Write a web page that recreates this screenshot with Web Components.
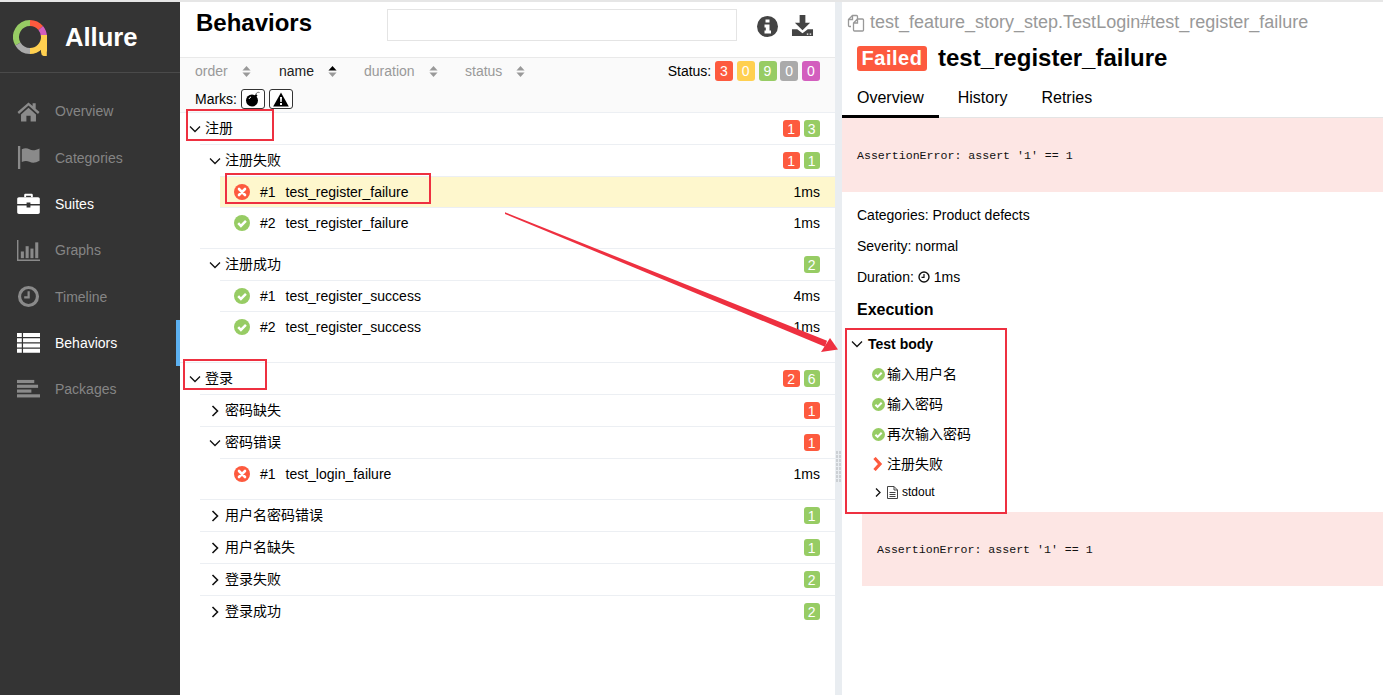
<!DOCTYPE html>
<html>
<head>
<meta charset="utf-8">
<title>Allure</title>
<style>
    html, body { margin: 0; height: 100%; overflow: hidden; }
    body { font: 14px "Liberation Sans", "Noto Sans CJK SC", sans-serif; color: #000; }
</style>
</head>
<body>
<allure-app>
    <side-bar slot="nav">
        <nav-item icon="home">Overview</nav-item>
        <nav-item icon="flag">Categories</nav-item>
        <nav-item icon="briefcase" bright>Suites</nav-item>
        <nav-item icon="chart">Graphs</nav-item>
        <nav-item icon="clock">Timeline</nav-item>
        <nav-item icon="list" bright active>Behaviors</nav-item>
        <nav-item icon="packages">Packages</nav-item>
    </side-bar>

    <behaviors-pane slot="list">
        <tree-group label="注册" fail="1" pass="3" open>
            <tree-group label="注册失败" fail="1" pass="1" open>
                <tree-leaf status="failed" num="1" name="test_register_failure" time="1ms" selected></tree-leaf>
                <tree-leaf status="passed" num="2" name="test_register_failure" time="1ms"></tree-leaf>
            </tree-group>
            <tree-group label="注册成功" pass="2" open>
                <tree-leaf status="passed" num="1" name="test_register_success" time="4ms"></tree-leaf>
                <tree-leaf status="passed" num="2" name="test_register_success" time="1ms"></tree-leaf>
            </tree-group>
        </tree-group>
        <tree-group label="登录" fail="2" pass="6" open>
            <tree-group label="密码缺失" fail="1"></tree-group>
            <tree-group label="密码错误" fail="1" open>
                <tree-leaf status="failed" num="1" name="test_login_failure" time="1ms"></tree-leaf>
            </tree-group>
            <tree-group label="用户名密码错误" pass="1"></tree-group>
            <tree-group label="用户名缺失" pass="1"></tree-group>
            <tree-group label="登录失败" pass="2"></tree-group>
            <tree-group label="登录成功" pass="2"></tree-group>
        </tree-group>
    </behaviors-pane>

    <test-detail slot="detail"></test-detail>
</allure-app>
<red-marks></red-marks>

<script>
const ICONS = {
    home: '<path d="M12 2.5 .5 12.6l1.6 1.9L12 5.8l9.9 8.7 1.6-1.9-4-3.5V3.5h-3.2v2.8z"/><path d="M4.2 15 12 8.2l7.8 6.8v7.5h-5.6v-6H9.8v6H4.200z"/>',
    flag: '<rect x="1" y="0" width="2.400" height="24"/><path d="M5 3.500c3-1.500 5.500-1.500 8 0 3 1.500 6.500 1 10.500-1v13c-4 2.200-7.500 2.500-10.500 1-2.500-1.300-5-1.300-8 .3z"/>',
    briefcase: '<path d="M7.500 4.500V2.200C7.500 1.300 8.200.800 9 .800h6c.800 0 1.500.500 1.500 1.400v2.300h-2V2.800h-5v1.700z"/><path d="M2 4.500h20c1 0 1.800.800 1.800 1.800v5.200H14v-1.500h-4v1.500H.200V6.300c0-1 .800-1.800 1.800-1.800z"/><path d="M.2 13H10v2h4v-2h9.800v7c0 1-.800 1.800-1.800 1.800H2c-1 0-1.800-.800-1.800-1.800z"/>',
    chart: '<path d="M0 1h1.500v20.500H24V23H0z"/><rect x="4" y="13" width="3.200" height="7"/><rect x="9" y="7.500" width="3.200" height="12.500"/><rect x="14" y="10" width="3.200" height="10"/><rect x="19" y="3.500" width="3.200" height="16.500"/>',
    clock: '<path fill-rule="evenodd" d="M12 1a11 11 0 1 0 0 22 11 11 0 0 0 0-22zm0 3.300a7.700 7.700 0 1 1 0 15.400 7.700 7.700 0 0 1 0-15.400z"/><path d="M11 6.500h2.300V14H7.500v-2.200H11z"/>',
    list: '<path d="M0 2h24v4.300H0zM0 7.500h24v4.300H0zM0 13h24v4.300H0zM0 18.500h24v4.300H0z"/><rect x="5" y="2" width="1.300" height="21" fill="#343434"/>',
    packages: '<rect x="0" y="2" width="18" height="3.300"/><rect x="0" y="7" width="22" height="3.300"/><rect x="0" y="12" width="15" height="3.300"/><rect x="0" y="17" width="24" height="3.300"/>'
};

// status colours used by the badges and the tree icons
const COLORS = { failed: '#fd5a3e', broken: '#ffd050', passed: '#97cc64', skipped: '#aaa', unknown: '#d35ebe' };

const statusIcon = (status, size) => status === 'failed'
    ? `<svg width="${size}" height="${size}" viewBox="0 0 16 16"><circle cx="8" cy="8" r="8" fill="${COLORS.failed}"/><path d="M5 5l6 6M11 5l-6 6" stroke="#fff" stroke-width="2.600" stroke-linecap="round"/></svg>`
    : `<svg width="${size}" height="${size}" viewBox="0 0 16 16"><circle cx="8" cy="8" r="8" fill="${COLORS.passed}"/><path d="M4.200 8.200l2.700 2.700 5-5" fill="none" stroke="#fff" stroke-width="2.500"/></svg>`;

const chevron = (open) => open
    ? '<svg width="12" height="12" viewBox="0 0 12 12"><path d="M1 3.500l5 5 5-5" fill="none" stroke="#111" stroke-width="1.300"/></svg>'
    : '<svg width="12" height="12" viewBox="0 0 12 12"><path d="M3.500 1l5 5-5 5" fill="none" stroke="#111" stroke-width="1.600"/></svg>';

class AllureApp extends HTMLElement {
    constructor() {
        super();
        this.attachShadow({ mode: 'open' });
        this.shadowRoot.innerHTML = `
            <style>
                :host { display: flex; height: 100vh; box-sizing: border-box; border-top: 2px solid #e6e6e6; background: #fff; }
                .nav { flex: 0 0 180px; display: flex; }
                .list { flex: 0 0 655px; display: flex; min-width: 0; }
                .split { flex: 0 0 7px; background: #e9edf1; }
                .grip { display: block; margin: 449px 0 0 1px; }
                .detail { flex: 1; display: flex; min-width: 0; }
            </style>
            <div class="nav"><slot name="nav"></slot></div>
            <div class="list"><slot name="list"></slot></div>
            <div class="split">
                <svg class="grip" width="5" height="32" viewBox="0 0 5 32" fill="#ccd0d4">
                    <path d="M0 0h2v3H0zM3 0h2v3H3zM0 4h2v3H0zM3 4h2v3H3zM0 8h2v3H0zM3 8h2v3H3zM0 12h2v3H0zM3 12h2v3H3zM0 16h2v3H0zM3 16h2v3H3zM0 20h2v3H0zM3 20h2v3H3zM0 24h2v3H0zM3 24h2v3H3zM0 28h2v3H0zM3 28h2v3H3z"/>
                </svg>
            </div>
            <div class="detail"><slot name="detail"></slot></div>
        `;
    }
}

class SideBar extends HTMLElement {
    constructor() {
        super();
        this.attachShadow({ mode: 'open' });
        this.shadowRoot.innerHTML = `
            <style>
                :host { display: block; width: 180px; background: #343434; color: #fff; }
                .brand {
                    box-sizing: border-box;
                    border-bottom: 1px solid #4a4a4a;
                    height: 71px;
                    display: flex;
                    align-items: center;
                    padding-left: 13px;
                }
                .brand svg { display: block; margin-top: 1px; }
                .name { font-size: 25.600px; font-weight: bold; margin-left: 17px; }
                nav { padding-top: 15.200px; }
            </style>
            <div class="brand">
                <svg width="35" height="36" viewBox="0 0 35 36" fill="none" stroke-width="6">
                    <path d="M4.900 24A14 14 0 0 1 17 3" stroke="#97cc64"/>
                    <path d="M17 3A14 14 0 0 1 27.700 8" stroke="#fd5a3e"/>
                    <path d="M27.700 8A14 14 0 0 1 31 17" stroke="#d35ebe"/>
                    <path d="M31 17A14 14 0 0 1 17 31" stroke="#ffd050"/>
                    <path d="M17 31A14 14 0 0 1 4.900 24" stroke="#aaa"/>
                    <path d="M31 15v17c0 .8.600 1.500 2.800 1.500" stroke="#ffd050"/>
                </svg>
                <span class="name">Allure</span>
            </div>
            <nav><slot></slot></nav>
        `;
    }
}

class NavItem extends HTMLElement {
    constructor() {
        super();
        this.attachShadow({ mode: 'open' });
    }

    connectedCallback() {
        const bright = this.hasAttribute('bright');
        this.shadowRoot.innerHTML = `
            <style>
                :host {
                    display: flex;
                    align-items: center;
                    height: 46.330px;
                    box-sizing: border-box;
                    padding-left: 17px;
                    color: ${bright ? '#fff' : '#858585'};
                    border-right: 4px solid ${this.hasAttribute('active') ? '#5cb0f0' : 'transparent'};
                }
                svg { flex: none; fill: ${bright ? '#fff' : '#8a8a8a'}; }
                .label { margin-left: 15px; }
            </style>
            <svg width="23" height="23" viewBox="0 0 24 24">${ICONS[this.getAttribute('icon')]}</svg>
            <span class="label"><slot></slot></span>
        `;
    }
}

class StatusBadge extends HTMLElement {
    constructor() {
        super();
        this.attachShadow({ mode: 'open' });
    }

    connectedCallback() {
        const big = this.hasAttribute('big');
        this.shadowRoot.innerHTML = `
            <style>
                :host {
                    display: inline-flex;
                    align-items: center;
                    justify-content: center;
                    width: ${big ? 18 : 16.5}px;
                    height: ${big ? 20 : 17}px;
                    border-radius: 3px;
                    color: #fff;
                    font-size: 14px;
                    background: ${COLORS[this.getAttribute('status')]};
                }
            </style>
            <slot></slot>
        `;
    }
}

class BehaviorsPane extends HTMLElement {
    constructor() {
        super();
        this.attachShadow({ mode: 'open' });
        const sorter = (label, current) => `<span class="sorter ${current ? 'current' : ''}">${label}<svg width="9" height="11" viewBox="0 0 10 12"><path d="M5 0l4.500 5H.5z" fill="${current ? '#000' : '#999'}"/><path d="M5 12l4.500-5H.5z" fill="#999"/></svg></span>`;
        this.shadowRoot.innerHTML = `
            <style>
                :host { display: block; flex: 1; min-width: 0; }
                .head {
                    box-sizing: border-box;
                    border-bottom: 1px solid #e9e9e9;
                    height: 56px;
                    display: flex;
                    padding: 6px 0 0 16px;
                    align-items: flex-start;
                }
                h2 { margin: 0; width: 191px; font-size: 24px; line-height: 30px; font-weight: bold; }
                .search { width: 350px; height: 32px; margin-top: 1px; box-sizing: border-box; border: 1px solid #e4e4e4; background: #fff; }
                .tools { display: flex; align-items: center; margin-left: 20px; margin-top: 8px; color: #444; }
                .tools svg { display: block; }
                .tools .dl { margin: -2px 0 0 13px; }
                .bar {
                    box-sizing: border-box;
                    height: 55px;
                    border-bottom: 1px solid #eceff3;
                    background: #fafafa;
                    padding: 3px 15px 0;
                }
                .line { display: flex; align-items: center; height: 20px; }
                .sorter { color: #999; display: inline-flex; align-items: center; }
                .sorter.current { color: #222; }
                .sorter svg { margin-left: 14px; }
                .s1 { width: 84px; }
                .s2 { width: 85px; }
                .s3 { width: 101px; }
                .status { margin-left: auto; display: flex; align-items: center; gap: 3.750px; }
                .marks { margin-top: 8px; height: 20px; display: flex; align-items: center; gap: 4px; }
                .mark {
                    width: 24px;
                    height: 20px;
                    box-sizing: border-box;
                    border: 1px solid #333;
                    border-radius: 3px;
                    background: #fff;
                    display: flex;
                    align-items: center;
                    justify-content: center;
                }
            </style>
            <div class="head">
                <h2>Behaviors</h2>
                <div class="search"></div>
                <div class="tools">
                    <svg width="21" height="21" viewBox="0 0 21 21">
                        <circle cx="10.500" cy="10.500" r="10.500" fill="#444"/>
                        <path d="M8.500 3.500h4v3h-4zM7.500 8.500h5v6h1.500v3H7.500v-3h1.300v-3H7.500z" fill="#fff"/>
                    </svg>
                    <svg class="dl" width="23" height="22" viewBox="0 0 24 23" fill="#444">
                        <path d="M9 0h6v8h5l-8 8-8-8h5z"/>
                        <path d="M1 15h5.500l5.500 4 5.500-4H23v7H1zM16.500 19.300h1.600v1.400h-1.600zM19.500 19.300h1.600v1.400h-1.600z" fill-rule="evenodd"/>
                    </svg>
                </div>
            </div>
            <div class="bar">
                <div class="line">
                    <span class="s1">${sorter('order')}</span>
                    <span class="s2">${sorter('name', true)}</span>
                    <span class="s3">${sorter('duration')}</span>
                    <span>${sorter('status')}</span>
                    <div class="status">
                        <span>Status:</span>
                        <status-badge big status="failed">3</status-badge>
                        <status-badge big status="broken">0</status-badge>
                        <status-badge big status="passed">9</status-badge>
                        <status-badge big status="skipped">0</status-badge>
                        <status-badge big status="unknown">0</status-badge>
                    </div>
                </div>
                <div class="marks">
                    <span>Marks:</span>
                    <div class="mark">
                        <svg width="16" height="16" viewBox="0 0 16 16">
                            <circle cx="7" cy="9.500" r="6" fill="#000"/>
                            <path d="M9.500 4.500l1.500-1.500 1.500 1.500-1.500 1.500z" fill="#000"/>
                            <path d="M11 3c.500-1.500 2-2 3.500-1.500" fill="none" stroke="#666"/>
                            <path d="M4 8a3 3 0 0 1 2-2" fill="none" stroke="#fff"/>
                        </svg>
                    </div>
                    <div class="mark">
                        <svg width="16" height="15" viewBox="0 0 16 15">
                            <path d="M8 .5l7.800 14H.200z" fill="#000"/>
                            <path d="M7 5h2l-.300 5H7.300zM7 11h2v2H7z" fill="#fff"/>
                        </svg>
                    </div>
                </div>
            </div>
            <slot></slot>
        `;
    }
}

class TreeGroup extends HTMLElement {
    constructor() {
        super();
        this.attachShadow({ mode: 'open' });
    }

    connectedCallback() {
        const open = this.hasAttribute('open');
        const fail = this.getAttribute('fail');
        const pass = this.getAttribute('pass');
        // only the group right under the sort bar loses its top line
        const first = this.parentElement.tagName === 'BEHAVIORS-PANE' && !this.previousElementSibling;
        this.shadowRoot.innerHTML = `
            <style>
                :host { display: block; padding-bottom: ${open ? 10 : 0}px; }
                .row {
                    height: 31px;
                    border-top: ${first ? 0 : '1px solid #eceff3'};
                    display: flex;
                    align-items: center;
                    padding: 0 15px 0 9px;
                }
                .arrow { width: 16px; height: 12px; flex: none; }
                .arrow svg { display: block; }
                .label { flex: 1; margin-bottom: 3px; }
                .badges { display: flex; gap: 4px; }
                .kids { margin-left: 20px; display: ${open ? 'block' : 'none'}; }
            </style>
            <div class="row">
                <span class="arrow">${chevron(open)}</span>
                <span class="label">${this.getAttribute('label')}</span>
                <span class="badges">
                    ${fail ? `<status-badge status="failed">${fail}</status-badge>` : ''}
                    ${pass ? `<status-badge status="passed">${pass}</status-badge>` : ''}
                </span>
            </div>
            <div class="kids"><slot></slot></div>
        `;
    }
}

class TreeLeaf extends HTMLElement {
    constructor() {
        super();
        this.attachShadow({ mode: 'open' });
    }

    connectedCallback() {
        this.shadowRoot.innerHTML = `
            <style>
                :host {
                    display: flex;
                    align-items: center;
                    height: 31px;
                    box-sizing: border-box;
                    border-top: 1px solid #eceff3;
                    padding: 0 15px 0 14px;
                    background: ${this.hasAttribute('selected') ? '#fef7cd' : '#fff'};
                }
                svg { display: block; flex: none; }
                .num { margin-left: 10px; width: 25.500px; }
                .name { flex: 1; }
            </style>
            ${statusIcon(this.getAttribute('status'), 16)}
            <span class="num">#${this.getAttribute('num')}</span>
            <span class="name">${this.getAttribute('name')}</span>
            <span>${this.getAttribute('time')}</span>
        `;
    }
}

class ErrorBlock extends HTMLElement {
    constructor() {
        super();
        this.attachShadow({ mode: 'open' });
        this.shadowRoot.innerHTML = `
            <style>
                :host {
                    display: flex;
                    align-items: center;
                    height: 74px;
                    padding-left: 15px;
                    background: #fde6e4;
                    font: 11.600px "Liberation Mono", monospace;
                    color: #111;
                }
            </style>
            <slot></slot>
        `;
    }
}

class StepRow extends HTMLElement {
    constructor() {
        super();
        this.attachShadow({ mode: 'open' });
    }

    connectedCallback() {
        const failed = this.getAttribute('status') === 'failed';
        const mark = failed
            ? '<svg width="14" height="14" viewBox="0 0 14 14"><path d="M2.500 1l5.500 6-5.500 6" fill="none" stroke="#fd5a3e" stroke-width="3.200"/></svg>'
            : statusIcon('passed', 13);
        this.shadowRoot.innerHTML = `
            <style>
                :host { display: flex; align-items: center; height: 30px; padding-left: 30px; }
                .mark { width: 15px; flex: none; }
                .text { margin-bottom: 2px; }
                svg { display: block; }
            </style>
            <span class="mark">${mark}</span>
            <span class="text"><slot></slot></span>
        `;
    }
}

class TestDetail extends HTMLElement {
    constructor() {
        super();
        this.attachShadow({ mode: 'open' });
        this.shadowRoot.innerHTML = `
            <style>
                :host { display: block; flex: 1; min-width: 0; background: #fff; }
                .path { display: flex; align-items: center; height: 39px; padding: 0 0 0 5px; margin-top: 1px; color: #999; font-size: 18px; white-space: nowrap; }
                .path svg { margin-right: 5px; flex: none; }
                .title { display: flex; align-items: center; padding-left: 15px; height: 32px; }
                .failed {
                    width: 70px;
                    height: 25px;
                    border-radius: 3px;
                    background: ${COLORS.failed};
                    color: #fff;
                    font-weight: bold;
                    font-size: 20px;
                    text-align: center;
                    line-height: 25px;
                    letter-spacing: .5px;
                }
                h2 { margin: 0 0 0 11px; font-size: 24px; font-weight: bold; }
                .tabs { display: flex; box-sizing: border-box; border-bottom: 1px solid #e4e4e4; font-size: 16px; height: 38px; margin-top: 6px; }
                .tab { padding: 0 15px; line-height: 36px; height: 38px; box-sizing: border-box; }
                .tab.on { border-bottom: 3px solid #000; margin-right: 4px; }
                .tab + .tab { margin-right: 4px; }
                .meta { padding: 7px 15px 0; }
                .meta div { height: 31px; display: flex; align-items: center; }
                .meta svg { margin: 0 4px; }
                h3 { margin: 1px 0 0; font-size: 16px; font-weight: bold; padding: 0 15px; line-height: 33px; }
                .body { height: 30px; display: flex; align-items: center; font-weight: bold; padding-left: 9px; margin-top: 3px; }
                .body svg { margin-right: 5px; display: block; }
                .out { height: 26px; display: flex; align-items: center; padding-left: 33px; font-size: 12px; margin-bottom: 7px; }
                .out svg { display: block; flex: none; }
                .out .file { margin: 0 4px 0 6px; }
                error-block.nested { margin-left: 20px; }
            </style>
            <div class="path">
                <svg width="18" height="18" viewBox="0 0 18 18" fill="none" stroke="#999" stroke-width="1.300">
                    <path d="M4 12.500H2.500c-.8 0-1-.5-1-1V5.500l4-4h4c.7 0 1 .3 1 1V5"/>
                    <path d="M5.500 1.500v4h-4"/>
                    <path d="M6.500 9l4-4h5c.7 0 1 .3 1 1v10c0 .7-.3 1-1 1h-8c-.7 0-1-.3-1-1zM10.500 5v4h-4"/>
                </svg>
                test_feature_story_step.TestLogin#test_register_failure
            </div>
            <div class="title">
                <span class="failed">Failed</span>
                <h2>test_register_failure</h2>
            </div>
            <div class="tabs">
                <span class="tab on">Overview</span>
                <span class="tab">History</span>
                <span class="tab">Retries</span>
            </div>
            <error-block>AssertionError: assert '1' == 1</error-block>
            <div class="meta">
                <div>Categories: Product defects</div>
                <div>Severity: normal</div>
                <div>Duration:<svg width="12" height="12" viewBox="0 0 12 12"><circle cx="6" cy="6" r="5" fill="none" stroke="#111" stroke-width="1.400"/><path d="M6 3v3.300H3.500" fill="none" stroke="#111" stroke-width="1.200"/></svg>1ms</div>
            </div>
            <h3>Execution</h3>
            <div class="body">${chevron(true)}Test body</div>
            <step-row status="passed">输入用户名</step-row>
            <step-row status="passed">输入密码</step-row>
            <step-row status="passed">再次输入密码</step-row>
            <step-row status="failed">注册失败</step-row>
            <div class="out">
                <svg width="6" height="9" viewBox="0 0 6 9"><path d="M1 .5l4 4-4 4" fill="none" stroke="#111" stroke-width="1.300"/></svg>
                <svg class="file" width="11" height="13" viewBox="0 0 11 13" fill="none" stroke="#444"><path d="M.5.500h6.500l3.500 3.500v8.500H.5zM7 .500V4h3.500M2.500 6.500h6M2.500 8.500h6M2.500 10.500h6"/></svg>
                stdout
            </div>
            <error-block class="nested">AssertionError: assert '1' == 1</error-block>
        `;
    }
}

// the red boxes and arrow someone drew on top of the screenshot
class RedMarks extends HTMLElement {
    constructor() {
        super();
        this.attachShadow({ mode: 'open' });
        this.shadowRoot.innerHTML = `
            <style>
                :host { position: absolute; inset: 0; pointer-events: none; display: block; }
                svg { display: block; position: absolute; left: 0; top: 0; }
            </style>
            <svg width="1383" height="695" fill="none" stroke="#ee3040" stroke-width="2">
                <rect x="187" y="110" width="86" height="30"/>
                <rect x="226" y="174" width="204" height="29"/>
                <rect x="184" y="360" width="82" height="29"/>
                <rect x="846" y="329" width="160" height="184"/>
                <path d="M505 212.300 827 340.700 825 346.700 505 214z" fill="#ee3040" stroke="none"/>
                <path d="M838 349.500 821 352 830 338z" fill="#ee3040" stroke="none"/>
            </svg>
        `;
    }
}

customElements.define('allure-app', AllureApp);
customElements.define('side-bar', SideBar);
customElements.define('nav-item', NavItem);
customElements.define('status-badge', StatusBadge);
customElements.define('behaviors-pane', BehaviorsPane);
customElements.define('tree-group', TreeGroup);
customElements.define('tree-leaf', TreeLeaf);
customElements.define('error-block', ErrorBlock);
customElements.define('step-row', StepRow);
customElements.define('test-detail', TestDetail);
customElements.define('red-marks', RedMarks);
</script>
</body>
</html>
